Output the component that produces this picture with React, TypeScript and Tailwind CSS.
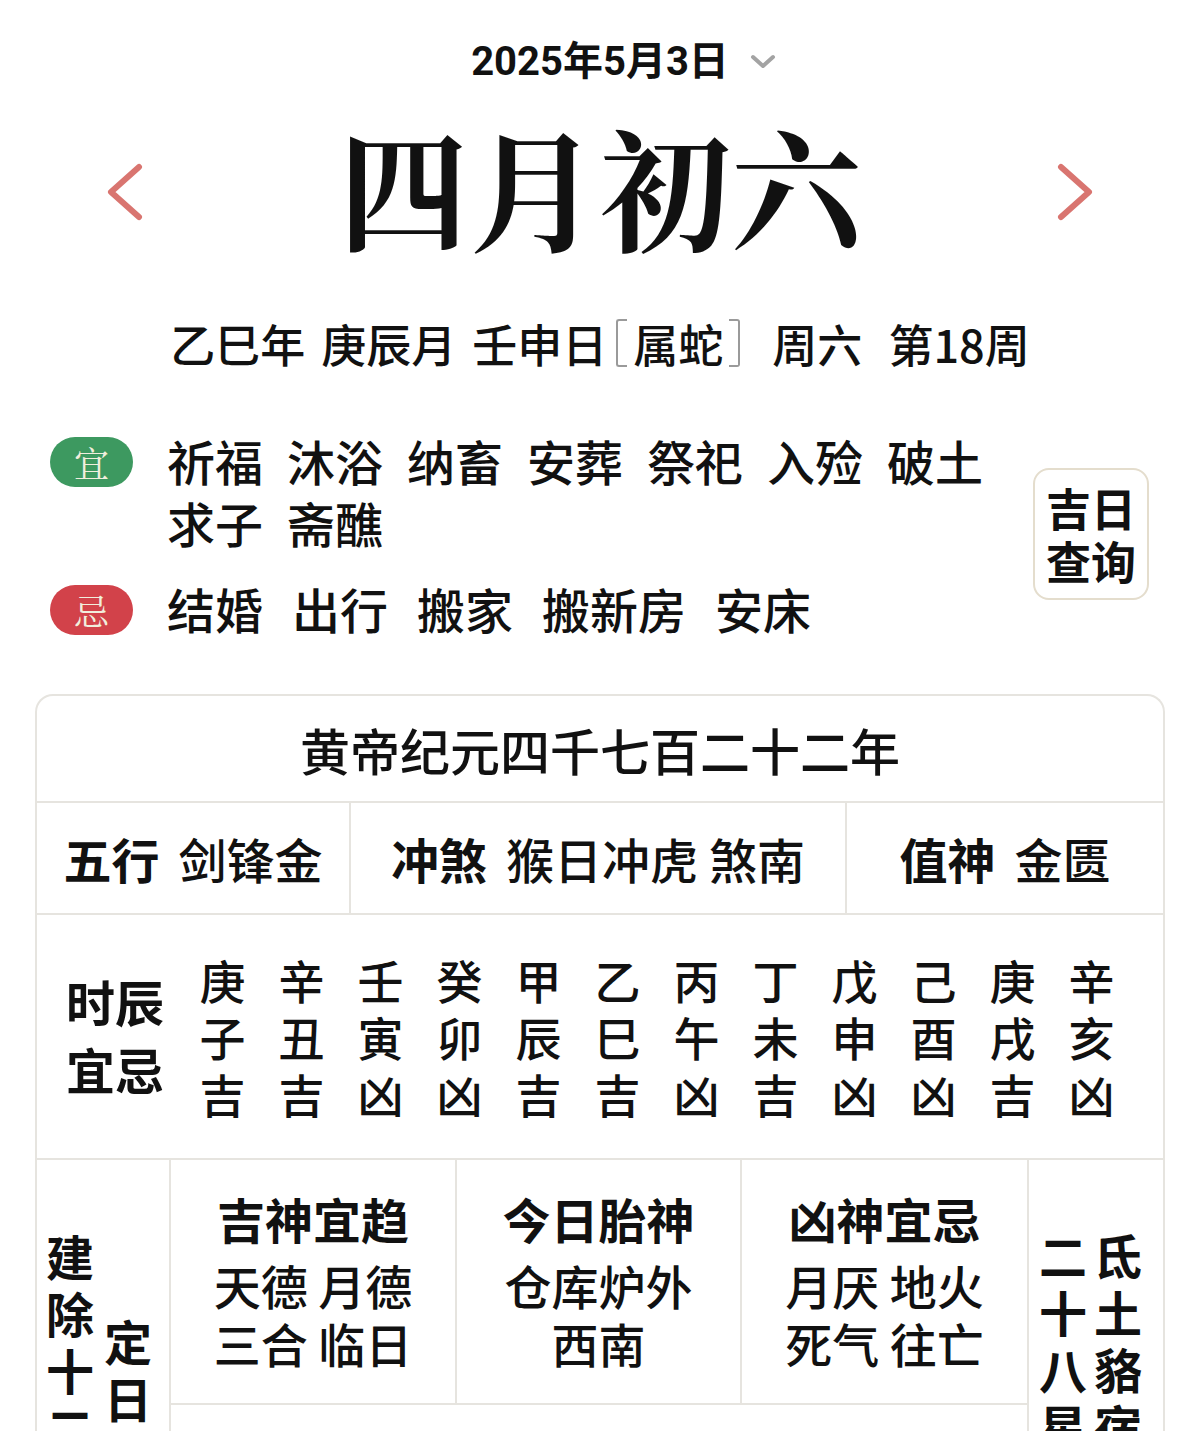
import React from "react";

const Chev = ({ dir }: { dir: "l" | "r" }) => (
  <svg width="40" height="58" viewBox="0 0 40 58" className="shrink-0">
    <polyline
      points={dir === "l" ? "34,4 6,29 34,54" : "6,4 34,29 6,54"}
      fill="none"
      stroke="#d97570"
      strokeWidth="6"
      strokeLinecap="round"
      strokeLinejoin="round"
    />
  </svg>
);

const Badge = ({ text, bg }: { text: string; bg: string }) => (
  <div
    className={`w-[83px] h-[50px] rounded-full flex items-center justify-center shrink-0 mt-[8px] text-[35px] leading-none text-[#f1eedd] font-['Noto_Serif_CJK_SC','Noto_Sans_CJK_SC',serif] ${bg}`}
  >
    {text}
  </div>
);

export default function App() {
  const yi = ["祈福", "沐浴", "纳畜", "安葬", "祭祀", "入殓", "破土", "求子", "斋醮"];
  const ji = ["结婚", "出行", "搬家", "搬新房", "安床"];
  const gan = "庚辛壬癸甲乙丙丁戊己庚辛".split("");
  const zhi = "子丑寅卯辰巳午未申酉戌亥".split("");
  const jx = "吉吉凶凶吉吉凶吉凶凶吉凶".split("");

  return (
    <div className="w-[1200px] min-h-[1431px] bg-white text-[#111] font-['Noto_Sans_CJK_SC',sans-serif] overflow-hidden">
      {/* date */}
      <div className="h-[124px] flex items-center justify-center">
        <div className="w-[47px]" />
        <span className="text-[40px] font-bold leading-none font-['Roboto','Noto_Sans_CJK_SC',sans-serif]">
          2025年5月3日
        </span>
        <svg className="ml-[21px]" width="26" height="16" viewBox="0 0 26 16">
          <polyline
            points="3,3 13,12 23,3"
            fill="none"
            stroke="#a3a3a3"
            strokeWidth="4"
            strokeLinecap="round"
            strokeLinejoin="round"
          />
        </svg>
      </div>

      {/* lunar title */}
      <div className="h-[136px] flex items-center justify-between px-[105px]">
        <Chev dir="l" />
        <div className="mb-[16px] text-[131px] leading-none font-bold font-['Noto_Serif_CJK_SC','Noto_Sans_CJK_SC',serif]">
          四月初六
        </div>
        <Chev dir="r" />
      </div>

      {/* ganzhi line */}
      <div className="mt-[40px] h-[86px] flex items-center justify-center text-[45px] font-medium leading-none">
        <span>乙巳年</span>
        <span className="ml-[16px]">庚辰月</span>
        <span className="ml-[16px]">壬申日</span>
        <span className="ml-[9px] w-[11px] h-[48px] border-2 border-r-0 border-[#9a9a9a] rounded-l-[3px]" />
        <span className="ml-[6px]">属蛇</span>
        <span className="ml-[6px] w-[11px] h-[48px] border-2 border-l-0 border-[#9a9a9a] rounded-r-[3px]" />
        <span className="ml-[32px]">周六</span>
        <span className="ml-[26px]">第18周</span>
      </div>

      {/* yi ji */}
      <div className="mt-[43px] flex items-center pl-[50px] pr-[51px]">
        <div className="flex flex-col">
          <div className="flex items-start">
            <Badge text="宜" bg="bg-[#3d9960]" />
            <div className="ml-[34px] w-[850px] flex flex-wrap gap-x-[24px] text-[48px] leading-[62px] font-medium">
              {yi.map((w) => (
                <span key={w}>{w}</span>
              ))}
            </div>
          </div>
          <div className="flex items-start mt-[24px]">
            <Badge text="忌" bg="bg-[#d2424a]" />
            <div className="ml-[34px] w-[850px] flex flex-wrap gap-x-[29px] text-[48px] leading-[62px] font-medium">
              {ji.map((w) => (
                <span key={w}>{w}</span>
              ))}
            </div>
          </div>
        </div>
        <div className="ml-auto w-[116px] h-[132px] border-2 border-[#e4ddcd] rounded-[16px] flex items-center justify-center">
          <div className="w-[90px] break-all text-[45px] font-bold leading-[53px] text-center">吉日查询</div>
        </div>
      </div>

      {/* card */}
      <div className="mt-[55px] mx-[35px] border-2 border-b-0 border-[#e6e4df] rounded-t-[18px]">
        <div className="h-[107px] flex items-center justify-center border-b-2 border-[#e6e4df] text-[50px] font-medium leading-none">
          黄帝纪元四千七百二十二年
        </div>

        <div className="grid grid-cols-[314px_496px_1fr] h-[112px] border-b-2 border-[#e6e4df] text-[48px] leading-none">
          <div className="flex items-center justify-center border-r-2 border-[#e6e4df]">
            <span className="font-bold">五行</span>
            <span className="ml-[19px] font-medium">剑锋金</span>
          </div>
          <div className="flex items-center justify-center border-r-2 border-[#e6e4df]">
            <span className="font-bold">冲煞</span>
            <span className="ml-[19px] font-medium">猴日冲虎 煞南</span>
          </div>
          <div className="flex items-center justify-center">
            <span className="font-bold">值神</span>
            <span className="ml-[19px] font-medium">金匮</span>
          </div>
        </div>

        <div className="h-[245px] flex items-center pl-[29px] border-b-2 border-[#e6e4df]">
          <div className="w-[98px] text-[49px] font-bold leading-[68px] mb-[4px] break-all">
            时辰宜忌
          </div>
          <div className="ml-[19px] w-[948px] grid grid-cols-12 text-[46px] leading-[57px] font-medium">
            {gan.map((g, i) => (
              <div key={i} className="flex justify-center">
                <div className="w-[46px] break-all">{g + zhi[i] + jx[i]}</div>
              </div>
            ))}
          </div>
        </div>

        <div className="grid grid-cols-[134px_286px_285px_287px_1fr] grid-rows-[245px_187px]">
          <div className="row-span-2 border-r-2 border-[#e6e4df] flex items-center pl-[9px] gap-[10px] text-[48px] font-bold leading-[57px]">
            <div className="w-[48px] break-all mb-[14px]">建除十二神</div>
            <div className="w-[48px] break-all mb-[14px]">定日</div>
          </div>

          {[
            ["吉神宜趋", "天德 月德\n三合 临日"],
            ["今日胎神", "仓库炉外\n西南"],
            ["凶神宜忌", "月厌 地火\n死气 往亡"],
          ].map(([t, a]) => (
            <div
              key={t}
              className="border-r-2 border-b-2 border-[#e6e4df] flex flex-col items-center pt-[34px]"
            >
              <span className="text-[48px] font-bold leading-[48px]">{t}</span>
              <span className="mt-[14px] text-[47px] font-medium leading-[58px] whitespace-pre-line text-center">{a}</span>
            </div>
          ))}

          <div className="row-span-2 flex items-start pt-[66px] pl-[10px] gap-[7px] text-[48px] font-bold leading-[57px]">
            <div className="w-[48px] break-all">二十八星宿</div>
            <div className="w-[48px] break-all">氐土貉宿</div>
          </div>

          <div className="col-span-3 border-r-2 border-[#e6e4df]" />
        </div>
      </div>
    </div>
  );
}
